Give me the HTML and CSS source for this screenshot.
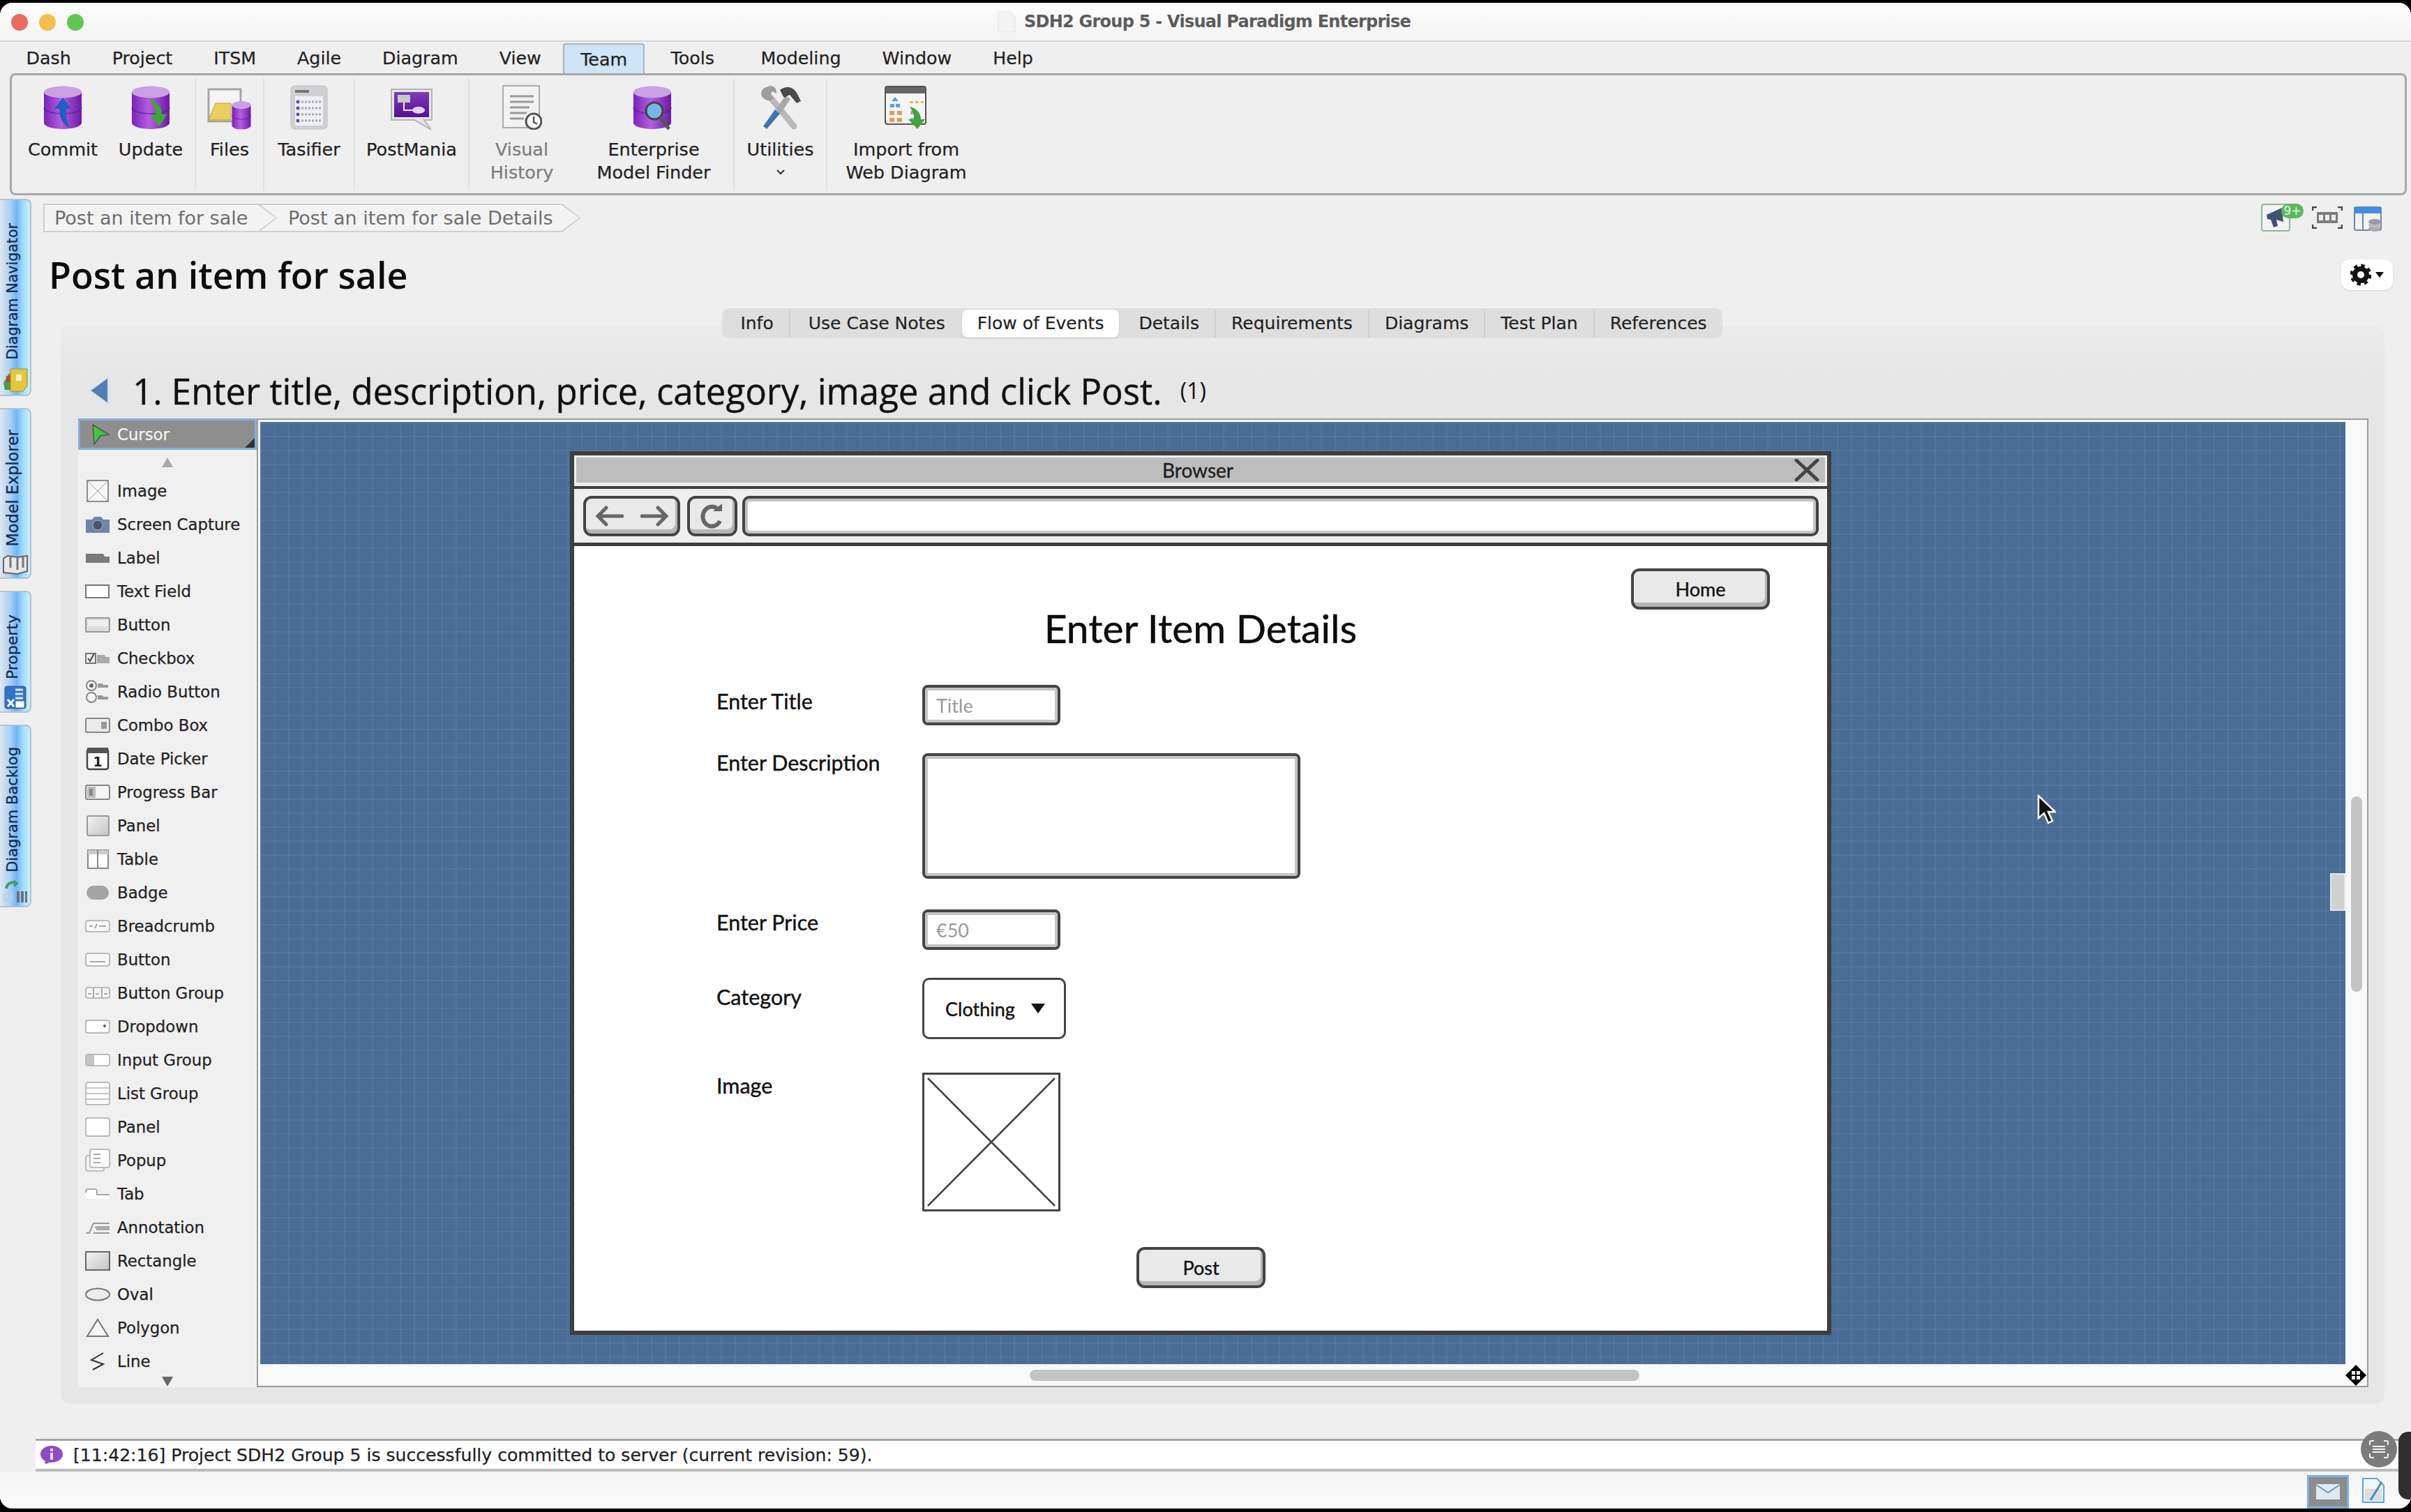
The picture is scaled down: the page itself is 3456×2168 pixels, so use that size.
FILE: index.html
```html
<!DOCTYPE html>
<html lang="en">
<head>
<meta charset="utf-8">
<title>SDH2 Group 5 - Visual Paradigm Enterprise</title>
<link rel="stylesheet" href="styles.css">
</head>
<body>
<svg class="defs" width="0" height="0" aria-hidden="true">
  <defs>
    <linearGradient id="cyl" x1="0" x2="1" y1="0" y2="0">
      <stop offset="0" stop-color="#7a22b8"/><stop offset=".45" stop-color="#b45fe0"/><stop offset="1" stop-color="#6d1aa6"/>
    </linearGradient>
    <linearGradient id="pgrad" x1="0" x2="1" y1="0" y2="1">
      <stop offset="0" stop-color="#f4f4f4"/><stop offset="1" stop-color="#c4c4c4"/>
    </linearGradient>
    <linearGradient id="ppl" x1="0" x2="0" y1="0" y2="1">
      <stop offset="0" stop-color="#7b3bb5"/><stop offset="1" stop-color="#5a0f96"/>
    </linearGradient>
    <symbol id="cylinder" viewBox="0 0 56 64">
      <path d="M1 10v44c0 5 12 9 27 9s27-4 27-9V10z" fill="url(#cyl)"/>
      <ellipse cx="28" cy="10" rx="27" ry="8.5" fill="#c9a0e4"/>
      <path d="M1 32c0 5 12 9 27 9s27-4 27-9" fill="none" stroke="#5b128f" stroke-opacity=".55" stroke-width="2"/>
    </symbol>
  </defs>
</svg>

<div class="window">
  <header class="titlebar">
    <div class="lights"><i class="light red"></i><i class="light amber"></i><i class="light green"></i></div>
    <div class="wintitle">
      <svg class="doc" width="26" height="30" viewBox="0 0 26 30"><path d="M1 0h16l8 8v22H1z" fill="#f4f4f4" stroke="#e4e4e4"/></svg>
      <span>SDH2 Group 5 - Visual Paradigm Enterprise</span>
    </div>
  </header>

  <nav class="menubar">
    <span class="menu">Dash</span><span class="menu">Project</span><span class="menu">ITSM</span><span class="menu">Agile</span><span class="menu">Diagram</span><span class="menu">View</span><span class="menu active">Team</span><span class="menu">Tools</span><span class="menu">Modeling</span><span class="menu">Window</span><span class="menu">Help</span>
  </nav>

  <section class="ribbon">
    <div class="rgroup">
      <div class="ritem w-commit">
        <svg class="ricon" width="56" height="64" viewBox="0 0 56 64"><use href="#cylinder" width="56" height="64"/><path d="M28 18l-12 16h7c0 10 3 20 14 27-3-10-5-18-4-27h7z" fill="#1f5fc0"/></svg>
        <span class="rlabel">Commit</span>
      </div>
      <div class="ritem w-update">
        <svg class="ricon" width="56" height="64" viewBox="0 0 56 64"><use href="#cylinder" width="56" height="64"/><path d="M24 18c14 6 20 14 20 24h7L40 60 28 42h7c0-8-4-16-11-24z" fill="#3fa53a"/></svg>
        <span class="rlabel">Update</span>
      </div>
    </div>
    <div class="rgroup">
      <div class="ritem w-files">
        <svg class="ricon" width="64" height="64" viewBox="0 0 64 64"><rect x="2" y="6" width="46" height="46" fill="#f4f4f4" stroke="#a5a5a5" stroke-width="3"/><path d="M2 50l10-24h22v24z" fill="#e8cf5e" stroke="#bba02e"/><g transform="translate(35 22) scale(.5 .66)"><use href="#cylinder" width="56" height="64"/></g></svg>
        <span class="rlabel">Files</span>
      </div>
    </div>
    <div class="rgroup">
      <div class="ritem w-tasifier">
        <svg class="ricon" width="54" height="64" viewBox="0 0 54 64"><rect x="1" y="1" width="52" height="62" rx="5" fill="#cfd0d3" stroke="#c0c0c0"/><rect x="7" y="7" width="20" height="4" fill="#777"/><rect x="7" y="16" width="40" height="42" fill="#eef0f5"/><path d="M16 24h28M16 33h28M16 42h28M16 51h28" stroke="#aaa" stroke-width="3" stroke-dasharray="3 2"/><g fill="#6a4bb5"><circle cx="11" cy="24" r="2.5"/><circle cx="11" cy="33" r="2.5"/><circle cx="11" cy="42" r="2.5"/><circle cx="11" cy="51" r="2.5"/></g></svg>
        <span class="rlabel">Tasifier</span>
      </div>
    </div>
    <div class="rgroup">
      <div class="ritem w-postmania">
        <svg class="ricon" width="64" height="64" viewBox="0 0 64 64"><path d="M3 6h58v44H50l10 14-24-14H3z" fill="#e6e6e6" stroke="#b5b5b5" stroke-width="2"/><rect x="7" y="10" width="50" height="36" fill="url(#ppl)"/><rect x="12" y="14" width="18" height="11" fill="#c8c8c8"/><path d="M21 25v11h12" fill="none" stroke="#eee" stroke-width="2"/><ellipse cx="42" cy="36" rx="9" ry="5" fill="#e0d4ee"/></svg>
        <span class="rlabel">PostMania</span>
      </div>
    </div>
    <div class="rgroup">
      <div class="ritem w-visual">
        <svg class="ricon" width="58" height="64" viewBox="0 0 58 64"><rect x="2" y="1" width="52" height="60" fill="#f2f2f2" stroke="#aaa" stroke-width="2"/><path d="M12 16h34M12 24h34M12 32h28M12 40h24M12 48h20" stroke="#9a9a9a" stroke-width="3"/><circle cx="46" cy="52" r="11" fill="#fff" stroke="#555" stroke-width="3"/><path d="M46 45v8l5 3" fill="none" stroke="#555" stroke-width="2.5"/></svg>
        <span class="rlabel dim">Visual<br>History</span>
      </div>
      <div class="ritem w-finder">
        <svg class="ricon" width="60" height="64" viewBox="0 0 60 64"><use href="#cylinder" width="56" height="64"/><circle cx="31" cy="37" r="12" fill="#78b6ea" stroke="#444" stroke-width="3"/><path d="M39 46l13 17" stroke="#555" stroke-width="5"/></svg>
        <span class="rlabel">Enterprise<br>Model Finder</span>
      </div>
    </div>
    <div class="rgroup">
      <div class="ritem w-util">
        <svg class="ricon" width="62" height="62" viewBox="0 0 62 62"><path d="M50 58L14 14" stroke="#b9b9b9" stroke-width="9" stroke-linecap="round"/><path d="M6 4c-4 5-4 11 2 15s10 2 13-1l-5-5 3-5 6 3c1-6-3-11-9-11z" fill="#9c9c9c"/><path d="M6 58l17-24 7 6-19 22z" fill="#3f74b2"/><path d="M24 34l14-20 7 5-14 21z" fill="#a9a9a9"/><path d="M30 6c8-6 18-6 24 4l6 12-6 3-10-12-8 4-2-3z" fill="#4a4a4a"/></svg>
        <span class="rlabel">Utilities</span>
        <svg class="chev" width="12" height="8" viewBox="0 0 12 8"><path d="M1 1l5 5 5-5" fill="none" stroke="#333" stroke-width="2"/></svg>
      </div>
    </div>
    <div class="rgroup last">
      <div class="ritem w-import">
        <svg class="ricon" width="62" height="62" viewBox="0 0 62 62"><rect x="1" y="1" width="58" height="54" rx="3" fill="#f5f5f5" stroke="#555" stroke-width="2"/><rect x="2" y="2" width="56" height="9" fill="#666"/><path d="M15 16l5 6h-10zM8 26h6v5H8zM16 26h6v5h-6z" fill="#5aa0de"/><path d="M36 22h5v3h-5zM44 22h5v3h-5zM52 22h4v3h-4z" fill="#e3c24e"/><path d="M7 36h7v6H7zM18 36h7v6h-7zM7 46h7v6H7zM18 46h7v6h-7z" fill="#e39a5e"/><path d="M37 36h6v5h-6zM37 46h6v5h-6z" fill="#b79ae0"/><path d="M36 30c10 2 16 10 16 18h6L47 62 34 48h8c1-6-2-12-6-18z" fill="#3fa53a"/></svg>
        <span class="rlabel">Import from<br>Web Diagram</span>
      </div>
    </div>
  </section>

  <div class="main">
    <aside class="side">
      <div class="vtab t1"><span class="vtext">Diagram Navigator</span>
        <svg class="vicon" width="38" height="38" viewBox="0 0 38 38"><path d="M2 24l8-14 6 4-2 20H4z" fill="#4b9e48"/><rect x="6" y="14" width="8" height="9" fill="#c2433d"/><path d="M12 4h24v24l-6 8H12z" fill="#e4c63f" stroke="#a88f1e"/><rect x="20" y="12" width="8" height="9" fill="#f5f0d0"/></svg>
      </div>
      <div class="vtab t2"><span class="vtext">Model Explorer</span>
        <svg class="vicon" width="38" height="32" viewBox="0 0 38 32"><path d="M2 8l6-4 14 2 14-2v22l-14 4-20-2z" fill="#e9e9e9" stroke="#666" stroke-width="2"/><path d="M12 5v16M22 6v18M30 5v16" stroke="#777" stroke-width="3"/></svg>
      </div>
      <div class="vtab t3"><span class="vtext">Property</span>
        <svg class="vicon" width="32" height="34" viewBox="0 0 32 34"><rect x="1" y="1" width="30" height="32" rx="3" fill="#2f73cc" stroke="#557"/><path d="M16 6h11M16 12h11M16 18h11" stroke="#dfe8f5" stroke-width="3"/><path d="M5 20l9 10M14 20L5 30M18 24h9v6h-9z" stroke="#fff" stroke-width="3" fill="#fff"/></svg>
      </div>
      <div class="vtab t4"><span class="vtext">Diagram Backlog</span>
        <svg class="vicon" width="36" height="36" viewBox="0 0 36 36"><path d="M5 14C6 7 12 4 18 6" fill="none" stroke="#3f9e6a" stroke-width="4"/><path d="M16 1l7 6-7 5z" fill="#3f9e6a"/><circle cx="8" cy="26" r="6" fill="none" stroke="#bcd" stroke-width="2"/><path d="M20 18h4v16h-4zM26 18h4v16h-4zM32 18h3v16h-3z" fill="#6b7280"/></svg>
      </div>
    </aside>

    <div class="content">
      <div class="crumbrow">
        <div class="crumbs">
          <span class="crumb first">Post an item for sale</span>
          <span class="crumb second">Post an item for sale Details</span>
        </div>
        <div class="tools">
          <div class="announce">
            <svg width="34" height="32" viewBox="0 0 34 32"><path d="M4 12l22-10 2 20-10-3 2 9-6 2-4-11-5-1z" fill="#3f5274"/></svg>
            <span class="badge">9+</span>
          </div>
          <svg class="tool-fit" width="44" height="32" viewBox="0 0 44 32"><path d="M1 6V1h6M37 1h6v5M1 26v5h6M37 31h6v-5" fill="none" stroke="#444" stroke-width="2.5"/><rect x="7" y="8" width="30" height="16" fill="#7c7c7c"/><g fill="#eee"><rect x="10" y="12" width="6" height="8"/><rect x="19" y="12" width="6" height="8"/><rect x="28" y="12" width="6" height="8"/></g></svg>
          <svg class="tool-win" width="42" height="38" viewBox="0 0 42 38"><rect x="1" y="1" width="38" height="33" rx="2" fill="#f2f2f2" stroke="#6e86a5" stroke-width="2"/><rect x="1" y="1" width="38" height="9" fill="#3f8de8"/><path d="M13 10v24" stroke="#6e86a5" stroke-width="2"/><ellipse cx="30" cy="32" rx="9" ry="4" fill="#aaa"/><ellipse cx="30" cy="27" rx="9" ry="4" fill="#bbb"/><ellipse cx="30" cy="22" rx="9" ry="4" fill="#99a"/></svg>
        </div>
      </div>

      <div class="titlerow">
        <h1 class="pagetitle">Post an item for sale</h1>
        <div class="gearbtn">
          <svg width="30" height="32" viewBox="0 0 30 32"><circle cx="15" cy="16" r="8.5" fill="none" stroke="#111" stroke-width="7"/><circle cx="15" cy="16" r="13" fill="none" stroke="#111" stroke-width="5" stroke-dasharray="5.2 5"/></svg>
          <svg width="12" height="8" viewBox="0 0 12 8"><path d="M0 0h12L6 8z" fill="#111"/></svg>
        </div>
      </div>

      <div class="segrow">
        <div class="segs">
          <span class="seg">Info</span><span class="seg nosep">Use Case Notes</span><span class="seg on">Flow of Events</span><span class="seg">Details</span><span class="seg">Requirements</span><span class="seg">Diagrams</span><span class="seg">Test Plan</span><span class="seg last">References</span>
        </div>
      </div>

      <section class="panel">
        <div class="stephead">
          <svg class="backtri" width="30" height="40" viewBox="0 0 30 40"><path d="M28 1v38L2 20z" fill="#4f81b5" stroke="#d5dde6" stroke-width="2"/></svg>
          <h2 class="steptitle">1. Enter title, description, price, category, image and click Post.</h2>
          <span class="stepcount">(1)</span>
        </div>
        <div class="workarea">
          <div class="palette">
            <div class="cursorrow">
              <svg width="26" height="30" viewBox="0 0 26 30"><path d="M2 1l23 14-12 2-9 12z" fill="#3fc43f" stroke="#555" stroke-width="1.5"/></svg>
              <span>Cursor</span>
              <i class="corner"></i>
            </div>
            <div class="parrow"><svg width="18" height="16" viewBox="0 0 18 16"><path d="M9 1l8 14H1z" fill="#aaa"/></svg></div>
            <div class="pitem"><svg class="pi" width="36" height="34" viewBox="0 0 36 34"><rect x="3" y="2" width="30" height="30" fill="#f6f6f6" stroke="#8c8c8c" stroke-width="2"/><path d="M4 3l28 28M32 3L4 31" stroke="#a0a0a0"/></svg>Image</div>
            <div class="pitem"><svg class="pi" width="36" height="26" viewBox="0 0 36 26"><path d="M1 6h9l3-4h10l3 4h9v19H1z" fill="#6d85a8"/><circle cx="18" cy="14" r="7" fill="#4c5566" stroke="#a9b8cc"/></svg>Screen Capture</div>
            <div class="pitem"><svg class="pi" width="36" height="16" viewBox="0 0 36 16"><path d="M1 2h25l2 4h7v9H1z" fill="#7a7a7a"/></svg>Label</div>
            <div class="pitem"><svg class="pi" width="36" height="20" viewBox="0 0 36 20"><rect x="1" y="1" width="33" height="18" fill="#fff" stroke="#777" stroke-width="2"/></svg>Text Field</div>
            <div class="pitem"><svg class="pi" width="36" height="22" viewBox="0 0 36 22"><rect x="1" y="1" width="34" height="20" rx="2" fill="#ddd" stroke="#999" stroke-width="2"/><rect x="4" y="4" width="28" height="9" fill="#efefef"/></svg>Button</div>
            <div class="pitem"><svg class="pi" width="36" height="18" viewBox="0 0 36 18"><rect x="1" y="2" width="14" height="14" fill="#eee" stroke="#777" stroke-width="2"/><path d="M4 9l3 4 6-11" fill="none" stroke="#444" stroke-width="2"/><path d="M17 4h11l1 3h6v9H17z" fill="#aaa"/></svg>Checkbox</div>
            <div class="pitem"><svg class="pi" width="36" height="34" viewBox="0 0 36 34"><circle cx="9" cy="8" r="7" fill="#f4f4f4" stroke="#888" stroke-width="2"/><circle cx="9" cy="8" r="3" fill="#666"/><circle cx="9" cy="25" r="7" fill="#f4f4f4" stroke="#888" stroke-width="2"/><path d="M18 5h7l1 2h7v4H18zM18 22h7l1 2h7v4H18z" fill="#999"/></svg>Radio Button</div>
            <div class="pitem"><svg class="pi" width="36" height="22" viewBox="0 0 36 22"><rect x="1" y="1" width="34" height="20" rx="2" fill="#eaeaea" stroke="#888" stroke-width="2"/><rect x="23" y="6" width="8" height="10" fill="#999"/></svg>Combo Box</div>
            <div class="pitem"><svg class="pi" width="34" height="34" viewBox="0 0 34 34"><rect x="2" y="3" width="30" height="29" rx="3" fill="#fff" stroke="#444" stroke-width="2.5"/><rect x="2" y="1" width="30" height="8" fill="#555"/><text x="17" y="28" class="caltext">1</text></svg>Date Picker</div>
            <div class="pitem"><svg class="pi" width="36" height="22" viewBox="0 0 36 22"><rect x="1" y="1" width="34" height="20" rx="2" fill="#f4f4f4" stroke="#888" stroke-width="2"/><rect x="3" y="3" width="12" height="16" fill="#bdbdbd"/><rect x="6" y="6" width="5" height="10" fill="#888"/></svg>Progress Bar</div>
            <div class="pitem"><svg class="pi" width="34" height="30" viewBox="0 0 34 30"><rect x="2" y="1" width="31" height="28" rx="2" fill="url(#pgrad)" stroke="#999" stroke-width="2"/></svg>Panel</div>
            <div class="pitem"><svg class="pi" width="34" height="30" viewBox="0 0 34 30"><rect x="3" y="2" width="29" height="26" fill="#fff" stroke="#888" stroke-width="2"/><rect x="3" y="2" width="29" height="6" fill="#ccc"/><path d="M17 2v26" stroke="#888" stroke-width="2"/></svg>Table</div>
            <div class="pitem"><svg class="pi" width="36" height="22" viewBox="0 0 36 22"><rect x="2" y="1" width="32" height="20" rx="10" fill="#a4a4a4"/></svg>Badge</div>
            <div class="pitem"><svg class="pi" width="36" height="18" viewBox="0 0 36 18"><rect x="1" y="1" width="34" height="16" rx="3" fill="#f8f8f8" stroke="#bbb" stroke-width="2"/><path d="M6 9h5M14 12l3-6M20 9h10" stroke="#aaa" stroke-width="2"/></svg>Breadcrumb</div>
            <div class="pitem"><svg class="pi" width="36" height="20" viewBox="0 0 36 20"><rect x="1" y="1" width="34" height="18" rx="3" fill="#f8f8f8" stroke="#bbb" stroke-width="2"/><path d="M7 13h22" stroke="#aaa" stroke-width="2"/></svg>Button</div>
            <div class="pitem"><svg class="pi" width="36" height="18" viewBox="0 0 36 18"><rect x="1" y="1" width="34" height="15" rx="3" fill="#f6f6f6" stroke="#bbb" stroke-width="2"/><path d="M12 2v13M24 2v13M4 10h5M15 10h5M27 10h5" stroke="#aaa" stroke-width="2"/></svg>Button Group</div>
            <div class="pitem"><svg class="pi" width="36" height="20" viewBox="0 0 36 20"><rect x="1" y="1" width="34" height="18" rx="3" fill="#fff" stroke="#bbb" stroke-width="2"/><circle cx="28" cy="9" r="2" fill="#555"/></svg>Dropdown</div>
            <div class="pitem"><svg class="pi" width="36" height="18" viewBox="0 0 36 18"><rect x="1" y="1" width="34" height="16" rx="3" fill="#fff" stroke="#bbb" stroke-width="2"/><rect x="2" y="2" width="11" height="14" fill="#c4c4c4"/></svg>Input Group</div>
            <div class="pitem"><svg class="pi" width="36" height="34" viewBox="0 0 36 34"><rect x="1" y="1" width="34" height="32" rx="3" fill="#fff" stroke="#bbb" stroke-width="2"/><path d="M2 9h32M2 17h32M2 25h32" stroke="#c6c6c6" stroke-width="2"/></svg>List Group</div>
            <div class="pitem"><svg class="pi" width="36" height="28" viewBox="0 0 36 28"><rect x="1" y="1" width="34" height="26" rx="3" fill="#fff" stroke="#bbb" stroke-width="2"/></svg>Panel</div>
            <div class="pitem"><svg class="pi" width="36" height="34" viewBox="0 0 36 34"><rect x="1" y="10" width="26" height="22" rx="3" fill="#f4f4f4" stroke="#bbb" stroke-width="2"/><rect x="7" y="1" width="28" height="26" rx="3" fill="#fff" stroke="#bbb" stroke-width="2"/><path d="M12 8h10M12 14h10M12 20h10" stroke="#aaa" stroke-width="2"/></svg>Popup</div>
            <div class="pitem"><svg class="pi" width="36" height="18" viewBox="0 0 36 18"><path d="M1 5q0-3 3-3h10q3 0 3 3v5h18v6H1z" fill="#fff"/><path d="M1 7q0-5 3-5h10q3 0 3 4v4h18" fill="none" stroke="#aaa" stroke-width="2"/></svg>Tab</div>
            <div class="pitem"><svg class="pi" width="36" height="20" viewBox="0 0 36 20"><path d="M1 18h5l6-14h23M12 18h23M14 10h21" fill="none" stroke="#999" stroke-width="2"/><path d="M16 8h19v6H16z" fill="#aaa"/></svg>Annotation</div>
            <div class="pitem"><svg class="pi" width="36" height="28" viewBox="0 0 36 28"><rect x="1" y="1" width="34" height="26" fill="url(#pgrad)" stroke="#666" stroke-width="2"/></svg>Rectangle</div>
            <div class="pitem"><svg class="pi" width="36" height="20" viewBox="0 0 36 20"><ellipse cx="18" cy="10" rx="17" ry="8.5" fill="#ececec" stroke="#777" stroke-width="2"/></svg>Oval</div>
            <div class="pitem"><svg class="pi" width="36" height="28" viewBox="0 0 36 28"><path d="M18 2l15 24H3z" fill="#f4f4f4" stroke="#777" stroke-width="2"/></svg>Polygon</div>
            <div class="pitem"><svg class="pi" width="36" height="28" viewBox="0 0 36 28"><path d="M26 2L9 12l17 6-15 8" fill="none" stroke="#333" stroke-width="2"/></svg>Line</div>
            <div class="parrow down"><svg width="18" height="16" viewBox="0 0 18 16"><path d="M1 1h16L9 15z" fill="#666"/></svg></div>
          </div>

          <div class="frame">
            <div class="canvas">
              <div class="browser">
                <div class="b-title">
                  <span></span><span class="b-name">Browser</span>
                  <svg class="b-close" width="36" height="32" viewBox="0 0 36 32"><path d="M3 2l30 28M33 2L3 30" stroke="#444" stroke-width="5" stroke-linecap="round"/></svg>
                </div>
                <div class="b-tools">
                  <div class="wbtn b-nav">
                    <svg width="40" height="30" viewBox="0 0 40 30"><path d="M38 15H4M15 3L3 15l12 12" fill="none" stroke="#666" stroke-width="5" stroke-linecap="round"/></svg>
                    <svg width="40" height="30" viewBox="0 0 40 30"><path d="M2 15h34M25 3l12 12-12 12" fill="none" stroke="#666" stroke-width="5" stroke-linecap="round"/></svg>
                  </div>
                  <div class="wbtn b-reload">
                    <svg width="34" height="36" viewBox="0 0 34 36"><path d="M25 8a13 14 0 1 0 3 17" fill="none" stroke="#666" stroke-width="6"/><path d="M18 11h13V0z" fill="#666"/></svg>
                  </div>
                  <div class="b-url"></div>
                </div>
                <div class="b-body">
                  <div class="wbtn wf w-home">Home</div>
                  <div class="wf w-head">Enter Item Details</div>
                  <div class="wf wl l-title">Enter Title</div>
                  <div class="wf winput w-title">Title</div>
                  <div class="wf wl l-desc">Enter Description</div>
                  <div class="wf winput w-desc"></div>
                  <div class="wf wl l-price">Enter Price</div>
                  <div class="wf winput w-price">€50</div>
                  <div class="wf wl l-cat">Category</div>
                  <div class="wf w-cat"><span>Clothing</span><svg width="20" height="14" viewBox="0 0 20 14"><path d="M0 0h20L10 14z" fill="#111"/></svg></div>
                  <div class="wf wl l-img">Image</div>
                  <svg class="wf w-img" width="198" height="199" viewBox="0 0 198 199"><rect x="1.5" y="1.5" width="195" height="196" fill="#fff" stroke="#444" stroke-width="3"/><path d="M8 8l182 183M190 8L8 191" stroke="#444" stroke-width="2.5"/></svg>
                  <div class="wbtn wf w-post">Post</div>
                </div>
              </div>
              <svg class="mouse" width="28" height="44" viewBox="0 0 28 44"><path d="M3 2v32l8-7 6 14 6-3-6-13h10z" fill="#111" stroke="#fff" stroke-width="2.5"/></svg>
              <div class="handle"></div>
            </div>
            <div class="vscroll"><i></i></div>
            <div class="hscroll"><i></i></div>
            <div class="movebox">
              <svg width="30" height="30" viewBox="0 0 30 30"><path d="M15 0l15 15-15 15L0 15z" fill="#000"/><g fill="#fff"><rect x="9" y="9" width="5" height="5"/><rect x="16" y="9" width="5" height="5"/><rect x="9" y="16" width="5" height="5"/><rect x="16" y="16" width="5" height="5"/></g></svg>
            </div>
          </div>
        </div>
      </section>
    </div>
  </div>

  <div class="logbar">
    <svg class="info" width="34" height="28" viewBox="0 0 34 28"><path d="M17 1c9 0 16 5 16 12s-7 12-16 12c-3 0-5 0-7 2l-3-1 1-3C4 21 1 17 1 13 1 6 8 1 17 1z" fill="#8e4bc6"/><rect x="15" y="11" width="4" height="10" fill="#eadcf5"/><rect x="15" y="5" width="4" height="4" fill="#eadcf5"/></svg>
    <span>[11:42:16] Project SDH2 Group 5 is successfully committed to server (current revision: 59).</span>
  </div>

  <footer class="statusbar">
    <div class="mailbtn"><svg width="34" height="22" viewBox="0 0 34 22"><rect width="34" height="22" fill="#dfeaf4"/><path d="M0 1l17 11L34 1" fill="none" stroke="#7a9ab8" stroke-width="2"/></svg></div>
    <svg class="notebtn" width="32" height="36" viewBox="0 0 32 36"><path d="M1 1h20l10 10v24H1z" fill="#f3f6f8" stroke="#58a8e0" stroke-width="2"/><rect x="4" y="16" width="24" height="17" fill="#ddd"/><path d="M12 32l16-26" stroke="#3f8fc0" stroke-width="3"/></svg>
  </footer>

  <div class="overlay-circle">
    <svg width="28" height="26" viewBox="0 0 28 26"><path d="M1 7V3q0-2 2-2h4M21 1h4q2 0 2 2v4M1 19v4q0 2 2 2h4M21 25h4q2 0 2-2v-4M5 9h18M5 13h18M5 17h18" fill="none" stroke="#f2f2f2" stroke-width="2"/></svg>
  </div>
  <div class="overlay-pill"></div>
</div>
</body>
</html>
```
FILE: styles.css
```css
* { box-sizing: border-box; }
html, body { margin: 0; padding: 0; background: #000; }
body { width: 3456px; height: 2168px; overflow: hidden; font-family: "DejaVu Sans", sans-serif; color: #222; }
.defs { position: absolute; }

.window { position: relative; margin-top: 4px; height: 2159px; background: #efefef; border-radius: 18px; overflow: hidden; display: flex; flex-direction: column; }

/* title bar */
.titlebar { position: relative; height: 56px; flex: none; display: flex; align-items: center; justify-content: center; background: linear-gradient(#fdfdfd, #f3f3f3); border-bottom: 2px solid #d6d6d6; }
.lights { position: absolute; left: 16px; top: 16px; display: flex; gap: 16px; }
.light { width: 24px; height: 24px; border-radius: 50%; }
.red { background: #ec6a5e; } .amber { background: #f4bf4f; } .green { background: #61c554; }
.wintitle { display: flex; align-items: center; gap: 12px; font-size: 24px; font-weight: 700; color: #5c5c5c; margin-left: -4px; }
.wintitle span { letter-spacing: -.75px; }

/* menu */
.menubar { height: 45px; flex: none; display: flex; align-items: center; padding-left: 8px; font-size: 25.3px; color: #222; -webkit-text-stroke: .25px currentColor; }
.menu { padding: 0 29.5px; height: 45px; line-height: 48px; }
.menu.active { padding: 0 23px; margin: 0 8px 0 2px; background: #cfe4f7; border: 2px solid #a8b4c0; border-bottom: none; border-radius: 4px 4px 0 0; align-self: flex-end; height: 43px; line-height: 44px; }
.menu.active + .menu { padding-right: 37px; }

/* ribbon */
.ribbon { flex: none; height: 175px; margin: 0 6px 0 14px; padding-left: 10px; border: 3px solid #a8a8a8; border-radius: 8px; background: #efefef; display: flex; font-size: 25.5px; -webkit-text-stroke: .25px currentColor; }
.rgroup { display: flex; margin: 4px 0; border-right: 2px solid #e2e2e2; padding-top: 10px; }
.rgroup.last { border-right: none; }
.ritem { display: flex; flex-direction: column; align-items: center; }
.ricon { height: 64px; flex: none; margin-bottom: 12px; }
.rlabel { line-height: 33px; text-align: center; white-space: nowrap; color: #222; }
.rlabel.dim { color: #7d7d7d; }
.chev { margin-top: 12px; }
.w-commit { width: 126px; } .w-update { width: 126px; } .w-files { width: 96px; } .w-tasifier { width: 128px; }
.w-postmania { width: 162px; } .w-visual { width: 150px; } .w-finder { width: 228px; } .w-util { width: 131px; } .w-import { width: 226px; }

/* main */
.main { flex: 1; display: flex; min-height: 0; }
.side { width: 45px; flex: none; display: flex; flex-direction: column; padding-top: 5px; gap: 17px; }
.vtab { width: 45px; flex: none; display: flex; flex-direction: column; align-items: center; justify-content: flex-end; padding-bottom: 3px; border: 2px solid #b6c2cf; border-left: none; border-radius: 0 8px 8px 0; background: linear-gradient(90deg, #dfe8f1 0%, #a8cff5 35%, #6fb7f7 55%, #a9e0fb 80%, #c8f0fd 100%); color: #14284a; font-size: 21px; -webkit-text-stroke: .25px currentColor; }
.t1 { height: 283px; } .t2 { height: 245px; font-size: 22.4px; } .t3 { height: 175px; font-size: 22px; } .t4 { height: 262px; }
.t1 { font-size: 20.6px; }
.vtext { writing-mode: vertical-rl; transform: rotate(180deg); margin-right: 8px; margin-bottom: 9px; white-space: nowrap; }
.vicon { flex: none; }

.content { flex: 1; min-width: 0; }
.crumbrow { display: flex; justify-content: space-between; align-items: flex-start; padding: 12px 40px 0 17px; height: 53px; }
.crumbs { display: flex; font-size: 27px; color: #6e6e6e; height: 41px; }
.crumb { position: relative; z-index: 0; height: 41px; line-height: 41px; display: block; background: #cfcfcf; clip-path: polygon(0 0, calc(100% - 26px) 0, 100% 50%, calc(100% - 26px) 100%, 0 100%); white-space: nowrap; }
.crumb::before { content: ""; position: absolute; z-index: -1; inset: 0; background: #f3f3f3; clip-path: polygon(2px 2px, calc(100% - 27px) 2px, calc(100% - 2px) 50%, calc(100% - 27px) calc(100% - 2px), 2px calc(100% - 2px)); }
.crumb.first { width: 335px; padding-left: 16px; z-index: 2; }
.crumb.second { width: 460px; padding-left: 41px; margin-left: -25px; z-index: 1; }
.tools { display: flex; align-items: flex-start; }
.announce { position: relative; width: 42px; height: 40px; border: 2px solid #8fb98f; border-radius: 4px; background: #f3f3f3; display: flex; align-items: center; justify-content: center; }
.badge { position: absolute; left: 27px; top: -2px; width: 32px; height: 21px; border-radius: 11px; background: #5cb85c; color: #e4f5e4; font-size: 17px; line-height: 21px; text-align: center; }
.tool-fit { margin: 4px 0 0 31px; }
.tool-win { margin: 4px 0 0 16px; }

.titlerow { display: flex; justify-content: space-between; align-items: flex-start; height: 109px; padding: 39px 26px 0 25px; }
.pagetitle { margin: 0; font-family: "Open Sans", sans-serif; font-size: 52px; font-weight: 600; line-height: 44px; color: #0c0c0c; }
.gearbtn { width: 74px; height: 44px; border-radius: 12px; background: #fff; box-shadow: 0 1px 2px #ccc; display: flex; align-items: center; justify-content: center; gap: 6px; }

.segrow { display: flex; justify-content: center; padding-left: 3px; height: 43px; margin-bottom: -18px; position: relative; z-index: 2; }
.segs { display: flex; align-items: center; height: 43px; padding-left: 4px; background: #dedede; border-radius: 10px; font-size: 25px; color: #222; -webkit-text-stroke: .2px currentColor; }
.seg { position: relative; padding: 0 22px; line-height: 40px; white-space: nowrap; border-right: 2px solid #cfcfcf; }
.seg.nosep, .seg.last, .seg.on { border-right: none; }
.seg.nosep { padding: 0 18px 0 26px; }
.seg.on { background: #fff; border-radius: 8px; box-shadow: 0 1px 2px #bbb; margin: 0 6px; }

.panel { height: 1546px; margin: 0 38px 0 42px; padding: 72px 0 24px 25px; background: linear-gradient(#ebebeb, #e6e6e6 80px); border-radius: 14px; }
.stephead { height: 61px; display: flex; align-items: center; padding: 0 0 20px 15px; }
.backtri { flex: none; }
.steptitle { margin: 0 0 0 33px; font-family: "Open Sans", sans-serif; font-size: 51px; font-weight: 400; line-height: 44px; color: #111; white-space: nowrap; -webkit-text-stroke: .4px currentColor; }
.stepcount { margin-left: 26px; font-family: "Open Sans", sans-serif; font-size: 32px; color: #111; }

.workarea { display: flex; height: 1389px; }
.palette { width: 256px; flex: none; background: #f0f0f0; font-size: 22.8px; color: #222; -webkit-text-stroke: .25px currentColor; }
.cursorrow { position: relative; height: 45px; display: flex; align-items: center; gap: 11px; padding-left: 16px; background: #8e8e8e; border: 3px solid #82b0dc; color: #f4f4f4; }
.corner { position: absolute; right: 0; bottom: 0; border-style: solid; border-width: 0 0 14px 14px; border-color: transparent transparent #333 transparent; }
.parrow { height: 35px; display: flex; align-items: center; justify-content: center; }
.parrow.down { height: 14px; margin-top: -6px; padding-top: 8px; }
.pitem { height: 48px; display: flex; align-items: center; padding-left: 10px; white-space: nowrap; }
.pi { width: 36px; flex: none; margin-right: 10px; }
.caltext { font-family: "DejaVu Sans", sans-serif; font-size: 19px; font-weight: 700; text-anchor: middle; fill: #222; }

.frame { position: relative; width: 3027px; flex: none; display: grid; grid-template-columns: 2989px 1fr; grid-template-rows: 1351px 1fr; background: #f9f9f9; border: 2px solid #9c9c9c; padding: 3px 0 0 3px; }
.canvas { position: relative; background-color: #4a6d96; background-image: linear-gradient(rgba(255,255,255,.05) 2px, transparent 2px), linear-gradient(90deg, rgba(255,255,255,.05) 2px, transparent 2px); background-size: 20px 20px; }
.vscroll { position: relative; }
.vscroll i { position: absolute; left: 8px; top: 537px; width: 16px; height: 280px; border-radius: 8px; background: #c4c4c4; }
.hscroll { position: relative; }
.hscroll i { position: absolute; left: 1103px; top: 8px; width: 874px; height: 16px; border-radius: 8px; background: #c4c4c4; }
.movebox { position: absolute; right: 1px; bottom: 0; width: 30px; height: 30px; }
.handle { position: absolute; right: 0; top: 647px; width: 22px; height: 54px; background: #d0d0d0; border: 2px solid #e6e6e6; }
.mouse { position: absolute; left: 2546px; top: 534px; }

/* wireframe (free canvas) */
.browser { position: absolute; left: 444px; top: 42px; width: 1808px; height: 1267px; background: #fff; border: 6px solid #3e3e3e; display: flex; flex-direction: column; font-family: "Lato", sans-serif; color: #111; -webkit-text-stroke: .4px currentColor; }
.b-title { height: 44px; flex: none; display: grid; grid-template-columns: 1fr auto 1fr; align-items: center; background: #bdbdbd; border: 3px solid #efefef; border-bottom-width: 5px; box-shadow: 0 4px 0 #3e3e3e; font-size: 28px; color: #222; padding-right: 8px; }
.b-close { justify-self: end; }
.b-tools { height: 82px; flex: none; margin-top: 4px; display: flex; align-items: center; gap: 10px; padding: 0 12px 0 13px; background: #efefef; border-bottom: 5px solid #3e3e3e; }
.wbtn { background: #e9e9e9; border: 4px solid #444; border-radius: 12px; box-shadow: inset -3px -6px 0 #b5b5b5; display: flex; align-items: center; justify-content: center; }
.b-nav { width: 139px; height: 58px; gap: 24px; }
.b-reload { width: 72px; height: 58px; margin-right: -3px; }
.b-url { flex: 1; height: 58px; background: #fff; border: 4px solid #444; border-radius: 10px; box-shadow: inset 0 0 0 4px #c4c4c4; }
.b-body { position: relative; flex: 1; background: #fff; }
.wf { position: absolute; }
.wl { left: 204px; height: 36px; line-height: 36px; font-size: 30.5px; white-space: nowrap; color: #111; }
.l-title { top: 204px; } .l-desc { top: 292px; } .l-price { top: 521px; } .l-cat { top: 628px; } .l-img { top: 755px; }
.w-head { left: 0; right: 0; top: 87px; line-height: 60px; font-size: 57px; text-align: center; color: #0c0c0c; }
.w-home { left: 1515px; top: 32px; width: 199px; height: 59px; font-size: 27px; }
.w-post { left: 806px; top: 1005px; width: 185px; height: 59px; font-size: 27px; }
.winput { left: 499px; background: #fff; border: 4px solid #444; border-radius: 8px; box-shadow: inset 0 0 0 4px #c4c4c4; color: #9a9a9a; font-size: 27px; display: flex; align-items: center; padding-left: 16px; -webkit-text-stroke: 0; }
.w-title { top: 199px; width: 198px; height: 58px; }
.w-desc { top: 297px; width: 542px; height: 180px; }
.w-price { top: 521px; width: 198px; height: 58px; }
.w-cat { left: 499px; top: 619px; width: 206px; height: 88px; background: #fff; border: 3px solid #444; border-radius: 10px; display: flex; align-items: center; justify-content: space-between; padding: 0 27px 0 30px; font-size: 27px; }
.w-img { left: 499px; top: 755px; }

/* log + status */
.logbar { flex: none; height: 47px; margin: 0 0 0 51px; display: flex; align-items: center; gap: 14px; padding-left: 6px; background: #fff; border-top: 3px solid #a6a6a6; border-bottom: 4px solid #bcbcbc; font-size: 25.1px; color: #222; white-space: nowrap; -webkit-text-stroke: .25px currentColor; }
.statusbar { flex: none; height: 53px; display: flex; justify-content: flex-end; align-items: flex-end; background: linear-gradient(#f4f4f4, #fbfbfb); padding-right: 38px; }
.mailbtn { width: 60px; height: 48px; background: #8c8c8c; border: 3px solid #7cb0e0; display: flex; align-items: center; justify-content: center; margin-right: 19px; }
.notebtn { margin-bottom: 8px; }
.overlay-circle { position: absolute; left: 3384px; top: 2048px; width: 52px; height: 52px; border-radius: 50%; background: #7b7b7b; display: flex; align-items: center; justify-content: center; }
.overlay-pill { position: absolute; left: 3438px; top: 2049px; width: 30px; height: 97px; border-radius: 14px 0 0 14px; background: #2e2e2e; }
```
